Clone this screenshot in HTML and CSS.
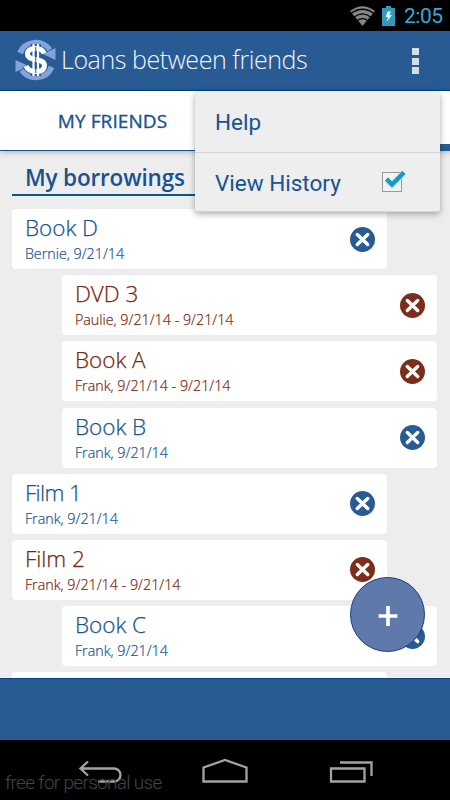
FILE: index.html
```html
<!DOCTYPE html>
<html lang="en">
<head>
<meta charset="utf-8">
<title>Loans between friends</title>
<link rel="stylesheet" href="styles.css">
</head>
<body>
<svg class="defs" width="0" height="0">
  <symbol id="remove" viewBox="0 0 25 25"><circle cx="12.5" cy="12.5" r="12.5" fill="currentColor"/><path d="M7.3 7.5L17.7 17.5M17.7 7.5L7.3 17.5" stroke="#fff" stroke-width="3.4" stroke-linecap="round"/></symbol>
</svg>
<div class="status">
  <svg width="25" height="20" viewBox="0 0 25 20"><path d="M0 5Q12.5 -4.500 25 5L12.500 20Z" fill="#858585"/><path d="M1 7.500Q12.500-1 24 7.500M4 11.200Q12.500 4.500 21 11.200M7 14.800Q12.500 10.500 18 14.800" fill="none" stroke="#000" stroke-width="1.300"/></svg>
  <svg class="battery" width="13" height="20" viewBox="0 0 13 20"><path d="M0 2H4V0H9V2H13V20H0Z" fill="#3598bd"/><path d="M5.500 5.500H9L7.500 9H10L4.500 16L6 11H3.500Z" fill="#e3f4fa"/></svg>
  <span class="clock">2:05</span>
</div>
<header class="bar">
  <svg class="logo" width="42" height="42" viewBox="0 0 42 42">
    <path d="M5 14A17 17 0 0 1 34.500 11" fill="none" stroke="#84a3dc" stroke-width="6"/><path d="M28 15L40.500 9V21Z" fill="#84a3dc"/>
    <path d="M36.500 28A17 17 0 0 1 7 31" fill="none" stroke="#84a3dc" stroke-width="6"/><path d="M.500 21V33L13.500 27Z" fill="#84a3dc"/>
    <g fill="none"><path d="M30 14C29 11 26 9.500 21 9.500C15 9.500 12 11.500 12 15C12 23 30 18 30 26.500C30 30.500 26.500 32.500 21 32.500C15 32.500 12 30.500 10.500 27M18.500 5V37M23 5V37" stroke="#285b94" stroke-width="6"/><path d="M29 14.500C28 11 25 9.500 21 9.500C15 9.500 12.500 11.500 12.500 15C12.500 23 29.500 18 29.500 26.500C29.500 30.500 26.500 32.500 21 32.500C15 32.500 12.500 30.500 11 27" stroke="#fff" stroke-width="5"/><path d="M18.500 5V37M23 5V37" stroke="#fff" stroke-width="2.200"/><path d="M20.750 8V34" stroke="#285b94"/></g>
  </svg>
  <h1>Loans between friends</h1>
  <div class="dots"><i></i><i></i><i></i></div>
</header>
<nav class="tabs"><div class="tab">MY FRIENDS</div><div class="tab active"></div></nav>
<main class="content">
  <h2><span>My borrowings</span></h2>
  <ul class="loans">
    <li class="card"><div><h3>Book D</h3><p>Bernie, 9/21/14</p></div><svg><use href="#remove"/></svg></li>
    <li class="card right late"><div><h3>DVD 3</h3><p>Paulie, 9/21/14 - 9/21/14</p></div><svg><use href="#remove"/></svg></li>
    <li class="card right late"><div><h3>Book A</h3><p>Frank, 9/21/14 - 9/21/14</p></div><svg><use href="#remove"/></svg></li>
    <li class="card right"><div><h3>Book B</h3><p>Frank, 9/21/14</p></div><svg><use href="#remove"/></svg></li>
    <li class="card"><div><h3 class="tight">Film 1</h3><p>Frank, 9/21/14</p></div><svg><use href="#remove"/></svg></li>
    <li class="card late"><div><h3>Film 2</h3><p>Frank, 9/21/14 - 9/21/14</p></div><svg><use href="#remove"/></svg></li>
    <li class="card right"><div><h3>Book C</h3><p>Frank, 9/21/14</p></div><svg><use href="#remove"/></svg></li>
    <li class="card"></li>
  </ul>
</main>
<footer class="bottom"></footer>
<div class="system">
  <svg width="450" height="60" viewBox="0 0 450 60" fill="none" stroke="#a3a3a3" stroke-width="2.300"><path d="M88 21.500L80.500 28.500L88 35.500M81 28.500H114A6.400 6.400 0 0 1 114 41.500H98"/><path d="M203.500 41.500V27.500L225 20L246.500 27.500V41.500Z"/><path d="M331 28.500H364.500V41.500H331ZM340 22.500H371.500V36"/></svg>
  <span class="note">free for personal use</span>
</div>
<div class="menu">
  <div class="item">Help</div>
  <div class="item"><span class="history">View History</span>
    <svg class="check" width="28" height="26" viewBox="0 0 28 26"><rect x="3.500" y="4.500" width="19" height="19" fill="#f3f3f3" stroke="#999"/><path d="M7.500 11.500L13 17L25 4.500" fill="none" stroke="#a9dced" stroke-width="6.500" opacity=".5"/><path d="M7.500 11L13 16.500L25 4.500" fill="none" stroke="#129acb" stroke-width="4.300"/></svg>
  </div>
</div>
<button class="fab" aria-label="Add"><svg width="20" height="20" viewBox="0 0 20 20"><path d="M10 0V20M.500 10H19.500" stroke="#fff" stroke-width="3.600"/></svg></button>
</body>
</html>
```
FILE: styles.css
```css
* { box-sizing: border-box; margin: 0; padding: 0; }
body { width: 450px; height: 800px; overflow: hidden; position: relative; display: flex; flex-direction: column; background: #ededed; color: #185293; font-family: "Open Sans", sans-serif; }
.defs { position: absolute; }
.status { height: 31px; flex: none; background: #000; display: flex; align-items: center; justify-content: flex-end; padding-right: 8px; color: #33a9d8; font: 21px/31px Roboto, sans-serif; }
.battery { margin: 0 9px 0 7px; }
.clock { width: 38px; padding-top: 2px; letter-spacing: -.5px; white-space: nowrap; }
.bar { height: 59.500px; flex: none; background: #285b94; border-bottom: 1px solid #004487; display: flex; align-items: center; padding: 0 31px 0 15px; }
.logo { flex: none; margin-right: 4px; }
h1 { flex: 1; color: #f0f4f8; font-size: 25px; font-weight: 300; line-height: 32px; letter-spacing: -.43px; margin-top: -2px; white-space: nowrap; }
.dots { display: flex; flex-direction: column; gap: 2.500px; margin-top: 2px; }
.dots i { width: 7px; height: 7px; background: #d4dee9; }
.tabs { height: 60.500px; flex: none; display: flex; background: #fff; box-shadow: 0 1px 6px #0004; position: relative; }
.tab { flex: 1; border-bottom: 1px solid #185293; text-align: center; font-size: 19px; letter-spacing: .1px; line-height: 60px; -webkit-text-stroke: .35px; }
.tab.active { border-bottom: 7px solid #285b94; }
.content { flex: 1; min-height: 0; overflow: hidden; padding: 11px 12.400px 0; }
h2 { height: 34px; border-bottom: 2px solid #07569b; padding-left: 12.500px; font-size: 22.500px; font-weight: 600; line-height: 32px; letter-spacing: -.15px; white-space: nowrap; }
.loans { list-style: none; padding-top: 13px; display: flex; flex-direction: column; gap: 6.200px; }
.card { flex: none; width: 375px; height: 60px; background: #fff; border-radius: 4px; display: flex; justify-content: space-between; align-items: center; padding: 0 12.500px; }
.card.right { margin-left: 50px; }
.card.late { color: #79260f; }
.card svg { width: 25px; height: 25px; color: #285b94; }
.card.late svg { color: #7b2e1b; }
h3 { font-size: 22.500px; font-weight: 300; line-height: 28px; padding-top: 1px; -webkit-text-stroke: .25px; }
h3.tight { letter-spacing: -.6px; }
.card p { font-size: 14.300px; font-weight: 300; line-height: 22px; padding-top: 1px; -webkit-text-stroke: .2px; white-space: nowrap; }
.bottom { height: 62.500px; flex: none; background: #285b94; border-top: 1px solid #004487; }
.system { height: 60px; flex: none; background: #000; position: relative; }
.note { position: absolute; left: 5px; top: 30px; color: #444; font: 300 19px/26px Roboto, sans-serif; letter-spacing: -.7px; }
.menu { position: absolute; left: 195px; top: 92px; width: 245px; height: 120px; background: #eee; border-radius: 2px; box-shadow: 0 2px 6px #0005; border-bottom: 1px solid #d4d4d4; font: 22.500px/60px Roboto, sans-serif; }
.item { height: 60px; padding: 0 33px 0 20px; display: flex; align-items: center; justify-content: space-between; }
.item + .item { border-top: 1px solid #d4d4d4; }
.check { margin-top: -4px; }
.fab { position: absolute; left: 350px; top: 577px; width: 75px; height: 75px; border: 1.500px solid #183f83; border-radius: 50%; background: #6079ab; display: grid; place-items: center; padding-top: 3px; }
```
